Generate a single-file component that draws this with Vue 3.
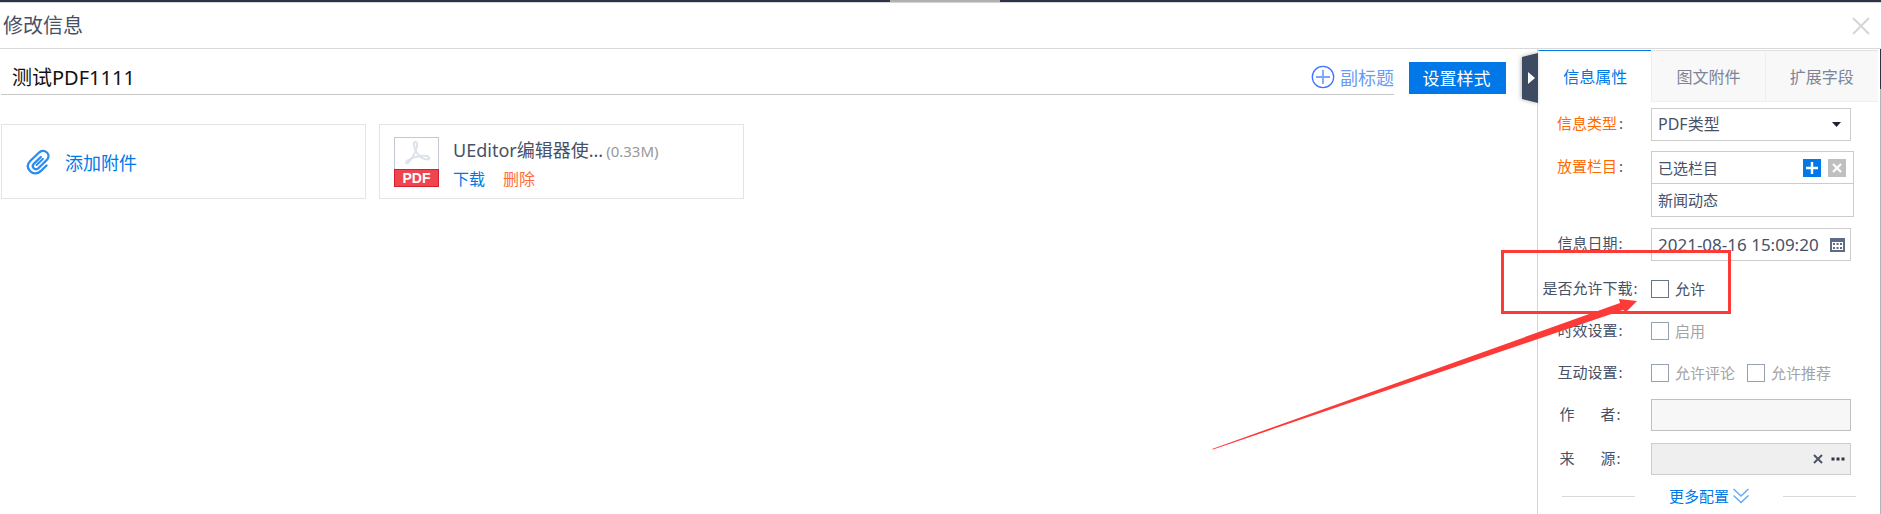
<script setup>
import { ref } from 'vue'

const title = ref('测试PDF1111')
const infoType = ref('PDF类型')
const date = ref('2021-08-16 15:09:20')
const author = ref('')
const source = ref('')
const tabs = ['信息属性', '图文附件', '扩展字段']
const activeTab = ref(0)
</script>

<template>
  <div class="page">
    <div class="topbar"><span class="handle"></span></div>
    <header class="head">
      <h1>修改信息</h1>
      <button class="close" aria-label="关闭">
        <svg width="18" height="18" viewBox="0 0 18 18"><path d="M1 1L17 17M17 1L1 17" stroke="#d6d6d6" stroke-width="2" fill="none" /></svg>
      </button>
    </header>

    <div class="body">
      <main class="main">
        <div class="title-row">
          <div class="title-line">
            <input v-model="title" class="title-input" type="text" aria-label="标题" />
            <button class="subtitle">
              <svg width="24" height="24" viewBox="0 0 24 24" fill="none">
                <circle cx="12" cy="12" r="10.7" stroke="#3d74ff" stroke-width="1.3" />
                <path d="M12 5V19M5 12H19" stroke="#7ba5f8" stroke-width="1.8" />
              </svg>
              <span>副标题</span>
            </button>
          </div>
          <button class="style-btn">设置样式</button>
        </div>

        <div class="cards">
          <button class="card add">
            <svg width="24" height="26" viewBox="0 0 24 26" fill="none" stroke="#2b8cee" stroke-width="2.3" stroke-linecap="round">
              <path d="M20.5 16.5L15 21.8C11.8 25 7.300 25.300 4.200 22.200C1.100 19.100 1.200 15.200 4.200 12L12.800 3.800C15.300 1.200 18.600 1.200 20.900 3.500C23.200 5.800 22.900 8.900 20.500 11.300L12.600 19C10.900 20.600 9 20.500 7.700 19.200C6.400 17.900 6.500 16.100 8 14.600L14.800 8" />
              <path d="M10.600 16L17 9.800" stroke-width="1.900" />
            </svg>
            <span>添加附件</span>
          </button>
          <div class="card file">
            <svg width="45" height="50" viewBox="0 0 45 50">
              <rect x="0.5" y="0.5" width="44" height="49" fill="#fff" stroke="#c3c8d4" />
              <path d="M21 5C18.500 6 20.500 12 23 16C25.500 19.500 30 22.500 33.500 22.500C36 22.500 35.500 19.500 33 19C27 18 18 20.500 13.500 23.500C11 25.500 12 27.500 14.500 25.500C18.500 22 23 12 23 8C23 6 22.500 4.500 21 5Z" fill="none" stroke="#dde1e9" stroke-width="2" />
              <rect x="0.5" y="32.500" width="44" height="17" fill="#f0454f" stroke="#d3202c" />
              <text x="22.500" y="45.500" text-anchor="middle" class="pdf-text">PDF</text>
            </svg>
            <div class="file-info">
              <div class="file-name">UEditor编辑器使...<small>(0.33M)</small></div>
              <div class="file-links">
                <a href="#">下载</a>
                <a href="#" class="delete">删除</a>
              </div>
            </div>
          </div>
        </div>
      </main>

      <aside class="side">
        <button class="collapse" aria-label="收起">
          <svg width="16" height="50" viewBox="0 0 16 50">
            <path d="M0 4L16 0V50L0 46Z" fill="#3c4a62" />
            <path d="M6 19L13 25L6 31Z" fill="#fff" />
          </svg>
        </button>

        <nav class="tabs">
          <button v-for="(t, i) in tabs" :key="t" :class="{ active: activeTab === i }" @click="activeTab = i">{{ t }}</button>
        </nav>

        <form class="form" @submit.prevent>
          <div class="row type">
            <label class="name req" for="type"><b>信息类型</b>:</label>
            <div class="control">
              <select id="type" v-model="infoType">
                <option>PDF类型</option>
              </select>
              <svg class="caret" width="9" height="5" viewBox="0 0 9 5"><path d="M0 0H9L4.500 5Z" fill="#1f2530" /></svg>
            </div>
          </div>

          <div class="row column">
            <span class="name req"><b>放置栏目</b>:</span>
            <div class="column-box">
              <div class="column-head">
                <span>已选栏目</span>
                <button type="button" class="mini plus" aria-label="添加栏目">
                  <svg width="18" height="18" viewBox="0 0 18 18"><path d="M9 3V15M3 9H15" stroke="#fff" stroke-width="2.400" /></svg>
                </button>
                <button type="button" class="mini" aria-label="清空栏目">
                  <svg width="18" height="18" viewBox="0 0 18 18"><path d="M5 5L13 13M13 5L5 13" stroke="#fff" stroke-width="2.200" /></svg>
                </button>
              </div>
              <div class="column-item">新闻动态</div>
            </div>
          </div>

          <div class="row date">
            <label class="name" for="date">信息日期<s>:</s></label>
            <div class="control">
              <input id="date" v-model="date" type="text" />
              <svg class="cal" width="15" height="14" viewBox="0 0 15 14">
                <rect width="15" height="14" fill="#5d6b85" />
                <path d="M2 4H13V12H2Z" fill="#fff" />
                <path d="M3 5h2v2h-2zM6.500 5h2v2h-2zM10 5h2v2h-2zM3 9h2v2h-2zM6.500 9h2v2h-2zM10 9h2v2h-2z" fill="#5d6b85" />
              </svg>
            </div>
          </div>

          <div class="row check">
            <span class="name">是否允许下载<s>:</s></span>
            <label class="dark"><input type="checkbox" /><span>允许</span></label>
          </div>
          <div class="row check">
            <span class="name">时效设置<s>:</s></span>
            <label><input type="checkbox" /><span>启用</span></label>
          </div>
          <div class="row check">
            <span class="name">互动设置<s>:</s></span>
            <label><input type="checkbox" /><span>允许评论</span></label>
            <label><input type="checkbox" /><span>允许推荐</span></label>
          </div>

          <div class="row author">
            <label class="name spread" for="author"><i>作</i><i>者<s>:</s></i></label>
            <div class="control"><input id="author" v-model="author" type="text" /></div>
          </div>
          <div class="row source">
            <label class="name spread" for="source"><i>来</i><i>源<s>:</s></i></label>
            <div class="control">
              <input id="source" v-model="source" type="text" />
              <div class="tools">
                <button type="button" aria-label="清除">
                  <svg width="10" height="10" viewBox="0 0 10 10"><path d="M1 1L9 9M9 1L1 9" stroke="#4a5261" stroke-width="1.900" /></svg>
                </button>
                <button type="button" aria-label="选择来源">
                  <svg width="14" height="4" viewBox="0 0 14 4"><path d="M0.500 0.500h3v3h-3zM5.500 0.500h3v3h-3zM10.500 0.500h3v3h-3z" fill="#2d3442" /></svg>
                </button>
              </div>
            </div>
          </div>

          <div class="more">
            <hr />
            <button type="button">
              <span>更多配置</span>
              <svg width="16" height="16" viewBox="0 0 16 16" fill="none" stroke="#63acf3" stroke-width="1.500"><path d="M0.500 1L8 8L15.500 1M0.500 7.500L8 14.500L15.500 7.500" /></svg>
            </button>
            <hr />
          </div>
        </form>

        <div class="mark-box"></div>
        <svg class="mark-arrow" width="426" height="152" viewBox="0 0 426 152">
          <path d="M0 150L408 4L407 0L425 2L414 13L411 11L1 150.500Z" fill="#fc3a38" />
        </svg>
      </aside>
      <div class="edge"></div>
    </div>
  </div>
</template>

<style>
body {
  margin: 0;
  background: #fff;
}
</style>

<style scoped>
.page,
.page button,
.page input,
.page select {
  font-family: "Noto Sans", "Noto Sans CJK SC", sans-serif;
}
.page {
  display: flex;
  flex-direction: column;
  min-height: 100vh;
  overflow: hidden;
  color: #475166;
}
.page * {
  box-sizing: border-box;
}
button {
  border: 0;
  padding: 0;
  background: none;
  cursor: pointer;
}
svg {
  display: block;
  flex: none;
}
a {
  color: #0078e7;
  text-decoration: none;
}
.topbar {
  height: 3px;
  display: flex;
  justify-content: center;
  background: #2c3446;
  border-bottom: 1px solid #d4d4d4;
}
.handle {
  width: 110px;
  height: 2px;
  margin-left: 9px;
  background: #b0b0b0;
}
.head {
  height: 46px;
  display: flex;
  align-items: center;
  justify-content: space-between;
  padding: 0 11px 0 3px;
  border-bottom: 1px solid #d9d9d9;
}
h1 {
  margin: 0;
  font-size: 20px;
  line-height: 30px;
  font-weight: 400;
}
.body {
  flex: 1;
  display: flex;
}
.main {
  flex: 1;
  min-width: 0;
}
.title-row {
  display: flex;
  align-items: flex-end;
  height: 46px;
  padding: 0 31px 0 1px;
  gap: 15px;
}
.title-line {
  flex: 1;
  height: 36px;
  display: flex;
  border-bottom: 1px solid #c8c8c8;
}
.title-input {
  flex: 1;
  min-width: 0;
  border: 0;
  outline: 0;
  padding: 0 11px;
  background: transparent;
  font-size: 20px;
  color: #111;
}
.subtitle {
  display: flex;
  align-items: center;
  gap: 5px;
  font-size: 18px;
  color: #6a9cf5;
}
.style-btn {
  width: 97px;
  height: 32px;
  margin-bottom: 1px;
  padding: 0 2px 2px 0;
  background: #0078e7;
  color: #fff;
  font-size: 17px;
}
.cards {
  display: flex;
  gap: 13px;
  padding: 29px 0 0 1px;
}
.card {
  width: 365px;
  height: 75px;
  display: flex;
  align-items: center;
  border: 1px solid #e4e4e4;
}
.add {
  padding-left: 24px;
  gap: 15px;
  font-size: 18px;
  color: #0078e7;
}
.file {
  padding-left: 14px;
  gap: 14px;
}
.pdf-text {
  font: bold 14px "Liberation Sans", sans-serif;
  fill: #fff;
}
.file-info {
  padding-top: 5px;
}
.file-name {
  font-size: 18px;
  line-height: 28px;
}
.file-name small {
  margin-left: 3px;
  font-size: 15px;
  color: #999;
}
.file-links {
  display: flex;
  gap: 18px;
  font-size: 16px;
  line-height: 28px;
}
.delete {
  color: #ff6c3c;
}
.side {
  position: relative;
  width: 343px;
  flex: none;
  border-left: 1px solid #d4d4d4;
}
.edge {
  width: 1px;
  background: linear-gradient(#2c3446 40px, #b4b4b4 40px);
}
.collapse {
  position: absolute;
  left: -16px;
  top: 4px;
  filter: drop-shadow(-1px 0 2px #bbb);
}
.tabs {
  display: flex;
  padding: 1px 2px 0 0;
}
.tabs button {
  flex: 1;
  height: 52px;
  font-size: 16px;
  color: #7c8596;
  background: #f8f8f8;
  border-top: 1px solid #e0e0e0;
  border-bottom: 1px solid #eee;
  border-left: 1px solid #eee;
}
.tabs .active {
  color: #0078e7;
  background: #fff;
  border-top-color: #0078e7;
  border-bottom-color: #fff;
  border-left-color: #fff;
}
.form {
  padding-top: 6px;
  font-size: 15px;
}
.row {
  display: flex;
  align-items: center;
}
.name {
  width: 104px;
  margin-right: 9px;
  flex: none;
  text-align: center;
  line-height: 24px;
  padding-bottom: 3px;
}
.name b {
  font-weight: 400;
  color: #ff6a00;
  margin-right: 2px;
}
.name s {
  margin-left: 1px;
  text-decoration: none;
}
.spread {
  display: flex;
  justify-content: center;
  gap: 26px;
}
.spread i {
  font-style: normal;
}
.control {
  position: relative;
  width: 200px;
}
.control select,
.control input {
  display: block;
  width: 100%;
  height: 33px;
  margin: 0;
  padding: 0 6px 1px;
  border: 1px solid #ccc;
  border-radius: 0;
  outline: 0;
  appearance: none;
  background: #fff;
  color: #475166;
  font-size: 16px;
}
.caret {
  position: absolute;
  right: 10px;
  top: 14px;
  pointer-events: none;
}
.type {
  margin-bottom: 10px;
}
.column {
  align-items: flex-start;
  margin-bottom: 11px;
}
.column .name {
  padding: 3px 0;
}
.column-box {
  width: 203px;
  border: 1px solid #ccc;
}
.column-head,
.column-item {
  display: flex;
  align-items: center;
  height: 32px;
  padding: 0 7px 0 6px;
}
.column-head {
  gap: 7px;
  border-bottom: 1px solid #ccc;
}
.column-head span {
  flex: 1;
}
.column-item {
  padding-bottom: 2px;
}
.mini {
  background: #bfbfbf;
}
.plus {
  background: #0078e7;
}
.date {
  margin-bottom: 7px;
}
.control #date {
  font-size: 17px;
}
.cal {
  position: absolute;
  right: 6px;
  top: 10px;
}
.check {
  height: 42px;
}
.check label {
  display: flex;
  align-items: center;
  gap: 6px;
  margin-right: 12px;
  color: #a3a3a3;
}
.check label span {
  padding-bottom: 2px;
}
.check .dark {
  color: #475166;
}
.check input {
  appearance: none;
  width: 18px;
  height: 18px;
  margin: 0;
  border: 1px solid #989fae;
  background: #fff;
}
.check .dark input {
  border-color: #6a7488;
}
.author {
  height: 42px;
}
.source {
  height: 46px;
}
.control #author,
.control #source {
  height: 32px;
  border-color: #c0c0c4;
  background: #f7f7f7;
}
.control #source {
  border-color: #ccc;
  background: #efefef;
}
.tools {
  position: absolute;
  right: 6px;
  top: 0;
  height: 32px;
  display: flex;
  align-items: center;
  gap: 8px;
}
.more {
  display: flex;
  align-items: center;
  justify-content: space-between;
  height: 28px;
  padding: 0 24px;
}
.more hr {
  width: 73px;
  margin: 0;
  border: 0;
  border-top: 1px solid #d9d9d9;
}
.more button {
  display: flex;
  align-items: center;
  gap: 4px;
  font-size: 15px;
  color: #0078e7;
}
.more span {
  padding-bottom: 2px;
}
.mark-box {
  position: absolute;
  left: -37px;
  top: 201px;
  width: 230px;
  height: 64px;
  border: 3px solid #fc3a38;
  pointer-events: none;
}
.mark-arrow {
  position: absolute;
  left: -326px;
  top: 250px;
  pointer-events: none;
}
</style>
